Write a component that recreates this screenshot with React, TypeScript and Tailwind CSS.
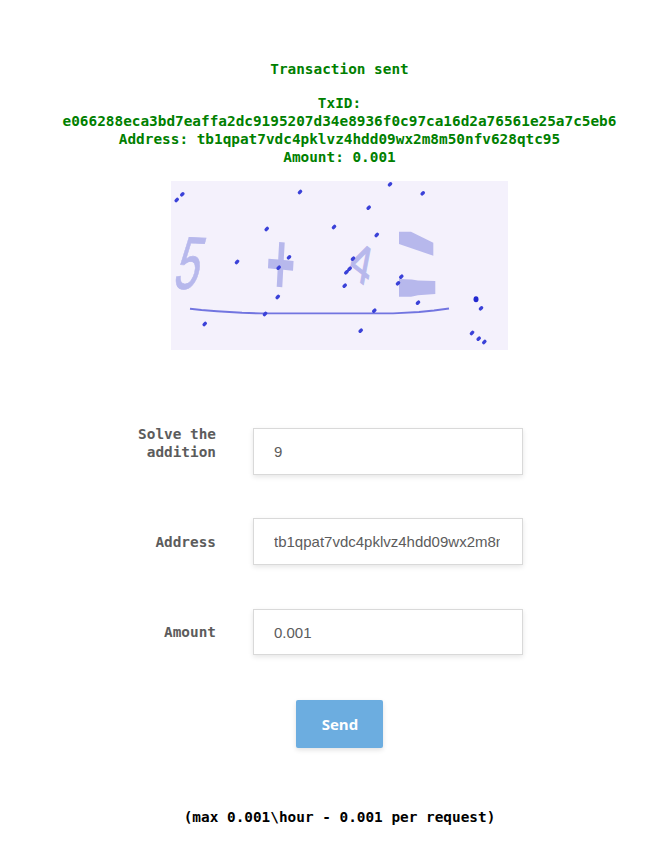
import clsx from 'clsx';

const TX_ID = 'e066288eca3bd7eaffa2dc9195207d34e8936f0c97ca16d2a76561e25a7c5eb6';
const ADDRESS = 'tb1qpat7vdc4pklvz4hdd09wx2m8m50nfv628qtc95';

const DOTS: [number, number][] = [
  [5.7, 19], [11.3, 13.3], [129, 11], [95.7, 48], [163, 46], [66, 81],
  [118, 76.3], [107.7, 86.7], [106.7, 116], [94, 133], [33.7, 143],
  [219, 3.3], [251.7, 12.3], [197.7, 26.7], [205.7, 54], [182, 77.7],
  [178.7, 87.7], [175.3, 91.3], [173.7, 104.7], [230.3, 95.7], [227, 102.3],
  [247, 121.7], [203.3, 129.7], [189.7, 149.7], [310, 127.3], [301, 152],
  [307.7, 157.7], [313.3, 161],
];

function Captcha() {
  return (
    <svg width="337" height="169" viewBox="0 0 337 169" className="block bg-[#f4f1fc] font-normal">
      <g fill="#b7b8ec" fontFamily="'Liberation Sans', sans-serif" fontSize="40">
        <text transform="matrix(1.1 .06 -.5 1.85 .5 107)" stroke="#b7b8ec" strokeWidth="0.4">5</text>
        <text transform="matrix(1.25 .12 -.12 2.2 93.5 111.5)" fontWeight="700">+</text>
        <text transform="matrix(.86 .68 -.25 1.3 177.5 92)" stroke="#b7b8ec" strokeWidth="0.8">4</text>
        <polygon points="228,50.7 240,50.7 262.3,61.7 262.3,74.7 228,63" />
        <polygon points="228,98 240.7,98.6 247,99.6 264.3,100 264.3,113 247,114.2 240,115.7 228,115.7" />
      </g>
      <path
        d="M19 127.8 L30.5 129 L46 130.2 L71 131.8 L90 132.4 H222 L248 131 L263 129.5 L278 127.5"
        fill="none" stroke="#7275e0" strokeWidth="1.9"
      />
      <g stroke="#3a41d8" strokeWidth="3.4" strokeLinecap="round">
        {DOTS.map(([x, y]) => (
          <line key={`${x}-${y}`} x1={x - 0.6} y1={y + 0.6} x2={x + 0.6} y2={y - 0.6} />
        ))}
        <line x1="175.3" y1="91.3" x2="179" y2="87.5" strokeWidth="2.4" />
      </g>
      <ellipse cx="305" cy="118.2" rx="2.5" ry="3" fill="#2228d0" />
    </svg>
  );
}

function Field({ label, value, top, short }: { label: string; value: string; top?: boolean; short?: boolean }) {
  return (
    <div className={clsx('flex', top ? 'items-start' : 'items-center', short ? 'mt-px h-[46px]' : 'h-[47px]')}>
      <label className={clsx('mr-[37px] w-[104px] text-right text-[#5c5c5c]', top && '-mt-[3px]')}>{label}</label>
      <input
        readOnly
        value={value}
        aria-label={label}
        className="h-full w-[270px] border border-[#d9d9d9] bg-white pr-[22px] pl-5 font-['Liberation_Sans',Arial,sans-serif] text-[15px] font-normal text-[#5c5c5c] shadow-[0_2px_5px_rgba(0,0,0,0.1)] outline-none"
      />
    </div>
  );
}

export default function App() {
  return (
    <main className="h-[845px] overflow-hidden bg-white pl-4 font-['DejaVu_Sans_Mono',monospace] text-[14.38px] leading-[18px] font-bold">
      <div className="flex flex-col items-center pt-[60px]">
        <p className="text-[#008000]">Transaction sent</p>
        <div className="mt-4 text-center text-[#008000]">
          <p>TxID:</p>
          <p>{TX_ID}</p>
          <p>Address: {ADDRESS}</p>
          <p>Amount: 0.001</p>
        </div>
        <div className="mt-[15px]">
          <Captcha />
        </div>
      </div>
      <form className="mt-[78px] ml-[96px] flex flex-col gap-[43px]">
        <Field label="Solve the addition" value="9" top />
        <Field label="Address" value={ADDRESS} />
        <Field label="Amount" value="0.001" short />
      </form>
      <div className="mt-[45px] flex flex-col items-center">
        <button
          type="button"
          className="h-12 w-[87px] rounded-[2px] bg-[#6cade0] pl-px font-['Open_Sans',sans-serif] text-[15px] font-bold text-white shadow-[0_2px_5px_rgba(0,0,0,0.12)]"
        >
          Send
        </button>
        <p className="mt-[60px] text-black">(max 0.001\hour - 0.001 per request)</p>
      </div>
    </main>
  );
}
